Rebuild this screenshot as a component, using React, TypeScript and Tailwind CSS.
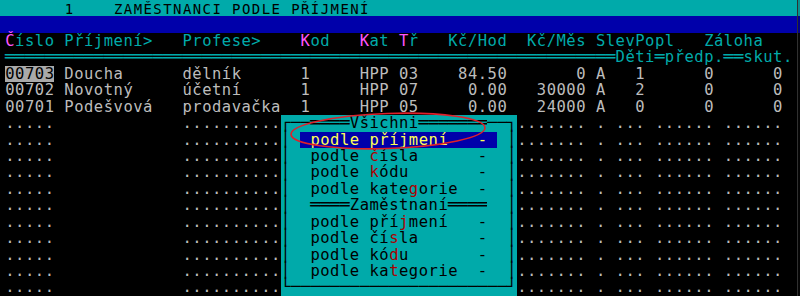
import React from 'react';

const COLS = 80;
const ROWS = 18;

type Attr = 'gray' | 'cyan' | 'magenta' | 'title' | 'mark' | 'win' | 'hot' | 'sel';

// text-mode attributes -> tailwind classes
const ATTR: Record<Attr, string> = {
  gray: 'text-[#bcbcbc]',
  cyan: 'text-[#00aaaa]',
  magenta: 'text-[#ff55ff]',
  title: 'text-black text-[14px]',
  mark: 'text-black bg-[#aaaaaa]',
  win: 'text-black bg-[#00aaaa]',
  hot: 'text-[#aa0000] bg-[#00aaaa]',
  sel: 'text-[#ffff55] bg-[#0000aa]',
};

type Cell = { ch: string; attr: Attr };

const BOX = /[─│┌┐└┘═]/;

const employees = [
  { no: '00703', name: 'Doucha', job: 'dělník', kod: '1', kat: 'HPP', tr: '03', hod: '84.50', mes: '0', slev: 'A', deti: '1', pred: '0', skut: '0' },
  { no: '00702', name: 'Novotný', job: 'účetní', kod: '1', kat: 'HPP', tr: '07', hod: '0.00', mes: '30000', slev: 'A', deti: '2', pred: '0', skut: '0' },
  { no: '00701', name: 'Podešvová', job: 'prodavačka', kod: '1', kat: 'HPP', tr: '05', hod: '0.00', mes: '24000', slev: 'A', deti: '0', pred: '0', skut: '0' },
];

// empty record slots: [startCol, width]
const SLOTS: [number, number][] = [
  [0, 5], [18, 10], [52, 7], [60, 1], [62, 3], [66, 6], [73, 6],
];

const MENU = [
  { text: 'podle příjmení', hot: -1 },
  { text: 'podle čísla', hot: 6 },
  { text: 'podle kódu', hot: 6 },
  { text: 'podle kategorie', hot: 10 },
];

const MENU2 = [
  { text: 'podle příjmení', hot: 9 },
  { text: 'podle čísla', hot: 8 },
  { text: 'podle kódu', hot: 8 },
  { text: 'podle kategorie', hot: 8 },
];

function buildScreen(): Cell[][] {
  const scr: Cell[][] = Array.from({ length: ROWS }, () =>
    Array.from({ length: COLS }, () => ({ ch: ' ', attr: 'gray' as Attr }))
  );
  const put = (r: number, c: number, s: string, attr: Attr) => {
    [...s].forEach((ch, i) => {
      if (c + i < COLS) scr[r][c + i] = { ch, attr };
    });
  };
  const right = (r: number, end: number, s: string, attr: Attr) => put(r, end - [...s].length + 1, s, attr);

  // title
  put(0, 6, '1', 'title');
  put(0, 11, 'ZAMĚSTNANCI PODLE PŘÍJMENÍ', 'title');

  // header
  put(2, 0, 'Číslo Příjmení>', 'cyan');
  put(2, 18, 'Profese>', 'cyan');
  put(2, 30, 'Kod', 'cyan');
  put(2, 36, 'Kat', 'cyan');
  put(2, 40, 'Tř', 'cyan');
  put(2, 45, 'Kč/Hod', 'cyan');
  put(2, 53, 'Kč/Měs', 'cyan');
  put(2, 60, 'SlevPopl', 'cyan');
  put(2, 71, 'Záloha', 'cyan');
  [0, 30, 36, 40].forEach((c) => (scr[2][c].attr = 'magenta'));

  put(3, 0, '═'.repeat(62), 'cyan');
  put(3, 62, 'Děti═předp.══skut.', 'cyan');

  // records
  employees.forEach((e, i) => {
    const r = 4 + i;
    put(r, 0, e.no, i === 0 ? 'mark' : 'gray');
    put(r, 6, e.name, 'gray');
    put(r, 18, e.job, 'gray');
    put(r, 30, e.kod, 'gray');
    put(r, 36, e.kat, 'gray');
    put(r, 40, e.tr, 'gray');
    right(r, 50, e.hod, 'gray');
    right(r, 58, e.mes, 'gray');
    put(r, 60, e.slev, 'gray');
    put(r, 64, e.deti, 'gray');
    put(r, 71, e.pred, 'gray');
    put(r, 78, e.skut, 'gray');
  });

  for (let r = 7; r < ROWS; r++) {
    SLOTS.forEach(([c, w]) => put(r, c, '.'.repeat(w), 'gray'));
  }

  // sort menu window
  for (let r = 7; r < ROWS; r++) put(r, 28, ' '.repeat(24), 'win');
  put(7, 28, '┌──════Všichni═══════──┐', 'win');
  for (let r = 8; r < 17; r++) {
    put(r, 28, '│', 'win');
    put(r, 51, '│', 'win');
  }
  put(17, 28, '└' + '─'.repeat(22) + '┘', 'win');
  put(12, 31, '════Zaměstnaní════', 'win');

  MENU.forEach((m, i) => {
    const r = 8 + i;
    if (i === 0) {
      put(r, 30, ' '.repeat(20), 'sel');
      put(r, 31, m.text, 'sel');
      put(r, 48, '-', 'sel');
      return;
    }
    put(r, 31, m.text, 'win');
    put(r, 48, '-', 'win');
    scr[r][31 + m.hot].attr = 'hot';
  });
  MENU2.forEach((m, i) => {
    const r = 13 + i;
    put(r, 31, m.text, 'win');
    put(r, 48, '-', 'win');
    scr[r][31 + m.hot].attr = 'hot';
  });

  return scr;
}

export default function App() {
  const screen = buildScreen();

  return (
    <div className="relative flex w-[800px] h-[296px] overflow-hidden bg-black font-['DejaVu_Sans_Mono',monospace] text-[15.5px] leading-[16.44px]">
      <div className="w-[797px]">
        {screen.map((row, r) => (
          <div
            key={r}
            className={`flex h-[16.44px] pl-[5px] ${r === 0 ? 'bg-[#00aaaa] pt-[1px]' : r === 1 ? 'bg-[#0000aa]' : ''}`}
          >
            {row.map((cell, c) => (
              <span
                key={c}
                className={`w-[9.85px] shrink-0 whitespace-pre text-center ${BOX.test(cell.ch) ? 'text-[16.4px]' : ''} ${ATTR[cell.attr]}`}
              >
                {cell.ch}
              </span>
            ))}
          </div>
        ))}
      </div>

      {/* window edge */}
      <div className="flex w-[3px] flex-col border-l border-[#303030]">
        <div className="h-[16.44px] bg-[#088f8f]" />
        <div className="h-[16.44px] bg-[#00008a]" />
        <div className="flex-1 bg-[#050505]" />
      </div>

      {/* hand-drawn red mark */}
      <svg className="absolute left-[288px] top-[110px]" width="202" height="42" viewBox="0 0 202 42">
        <ellipse cx="100" cy="21" rx="97" ry="17.5" fill="none" stroke="#e0202a" strokeWidth="1.6" transform="rotate(-2 100 21)" />
      </svg>
    </div>
  );
}
